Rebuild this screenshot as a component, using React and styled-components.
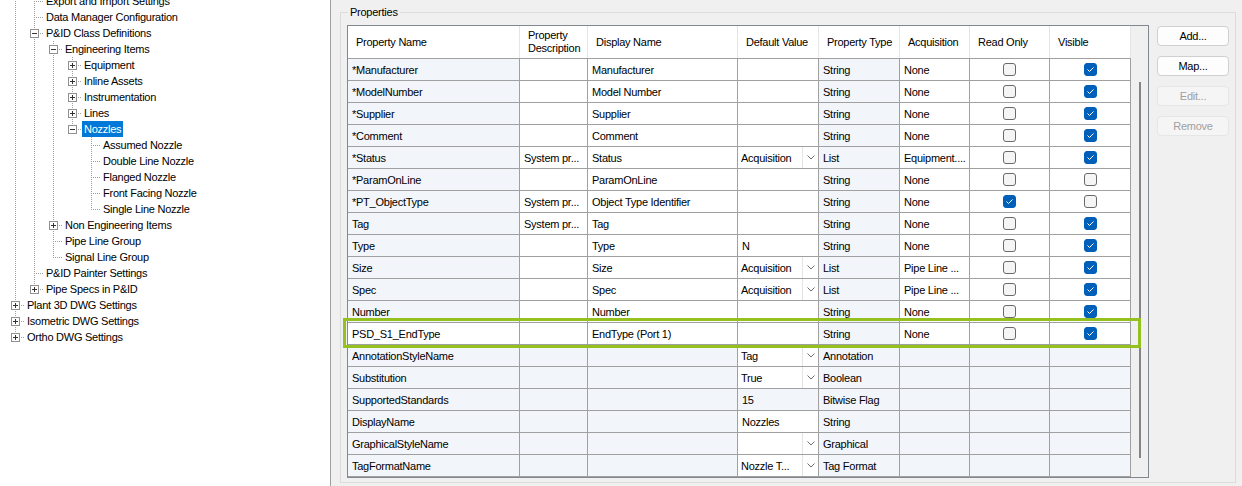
import React from 'react';
import styled, { createGlobalStyle, css } from 'styled-components';

const GlobalStyle = createGlobalStyle`
  html, body { margin:0; padding:0; }
  body {
    background:#f0f0f0;
    font-family:"Liberation Sans", Arial, sans-serif;
    font-size:11px;
    letter-spacing:-0.25px;
    color:#000;
  }
`;

const COLS = '172px 68px 150px 81px 81px 70px 80px 81px';
const SHADE = '#f2f5fa';

const TREE = [
  { label: 'P&ID DWG Settings', open: true, children: [
    { label: 'Export and Import Settings' },
    { label: 'Data Manager Configuration' },
    { label: 'P&ID Class Definitions', open: true, children: [
      { label: 'Engineering Items', open: true, children: [
        { label: 'Equipment', children: [] },
        { label: 'Inline Assets', children: [] },
        { label: 'Instrumentation', children: [] },
        { label: 'Lines', children: [] },
        { label: 'Nozzles', open: true, selected: true, children: [
          { label: 'Assumed Nozzle' },
          { label: 'Double Line Nozzle' },
          { label: 'Flanged Nozzle' },
          { label: 'Front Facing Nozzle' },
          { label: 'Single Line Nozzle' },
        ]},
      ]},
      { label: 'Non Engineering Items', children: [] },
      { label: 'Pipe Line Group' },
      { label: 'Signal Line Group' },
    ]},
    { label: 'P&ID Painter Settings' },
    { label: 'Pipe Specs in P&ID', children: [] },
  ]},
  { label: 'Plant 3D DWG Settings', children: [] },
  { label: 'Isometric DWG Settings', children: [] },
  { label: 'Ortho DWG Settings', children: [] },
];

const flatten = (nodes, guides = [], out = []) => {
  nodes.forEach((n, i) => {
    const last = i === nodes.length - 1;
    out.push({ ...n, guides, last });
    if (n.open && n.children) flatten(n.children, [...guides, !last], out);
  });
  return out;
};

const ROWS = [
  { name: '*Manufacturer', disp: 'Manufacturer', type: 'String', acq: 'None', vis: true },
  { name: '*ModelNumber', disp: 'Model Number', type: 'String', acq: 'None', vis: true },
  { name: '*Supplier', disp: 'Supplier', type: 'String', acq: 'None', vis: true },
  { name: '*Comment', disp: 'Comment', type: 'String', acq: 'None', vis: true },
  { name: '*Status', desc: 'System pr...', disp: 'Status', combo: 'Acquisition', type: 'List', acq: 'Equipment....', vis: true },
  { name: '*ParamOnLine', disp: 'ParamOnLine', type: 'String', acq: 'None' },
  { name: '*PT_ObjectType', desc: 'System pr...', disp: 'Object Type Identifier', type: 'String', acq: 'None', ro: true },
  { name: 'Tag', desc: 'System pr...', disp: 'Tag', type: 'String', acq: 'None', vis: true },
  { name: 'Type', disp: 'Type', def: 'N', type: 'String', acq: 'None', vis: true },
  { name: 'Size', disp: 'Size', combo: 'Acquisition', type: 'List', acq: 'Pipe Line ...', vis: true },
  { name: 'Spec', disp: 'Spec', combo: 'Acquisition', type: 'List', acq: 'Pipe Line ...', vis: true },
  { name: 'Number', disp: 'Number', type: 'String', acq: 'None', vis: true },
  { name: 'PSD_S1_EndType', disp: 'EndType (Port 1)', type: 'String', acq: 'None', vis: true, user: true, marked: true },
  { name: 'AnnotationStyleName', combo: 'Tag', type: 'Annotation', sys: true },
  { name: 'Substitution', combo: 'True', type: 'Boolean', sys: true },
  { name: 'SupportedStandards', def: '15', type: 'Bitwise Flag', sys: true, lockedDef: true },
  { name: 'DisplayName', def: 'Nozzles', type: 'String', sys: true },
  { name: 'GraphicalStyleName', combo: '', type: 'Graphical', sys: true },
  { name: 'TagFormatName', combo: 'Nozzle T...', type: 'Tag Format', sys: true },
];

const HEADERS = ['Property Name', 'Property\nDescription', 'Display Name', 'Default Value', 'Property Type', 'Acquisition', 'Read Only', 'Visible'];

const Window = styled.div`
  display:flex;
  width:1242px;
  height:486px;
  overflow:hidden;
  background:#f0f0f0;
`;

/* ---------- tree ---------- */

const TreePanel = styled.div`
  width:330px;
  flex:none;
  background:#fff;
  border-right:1px solid #a0a0a0;
  overflow:hidden;
`;

const TreeList = styled.ul`
  list-style:none;
  margin:-23px 0 0;
  padding:0 0 0 6px;
`;

const TreeRow = styled.li`
  display:flex;
  height:16px;
`;

const dotsV = 'repeating-linear-gradient(to bottom, #a0a0a0 0 1px, transparent 1px 2px)';
const dotsH = 'repeating-linear-gradient(to right, #a0a0a0 0 1px, transparent 1px 2px)';

const Guide = styled.span`
  position:relative;
  width:19px;
  flex:none;
  ${p => p.$line && css`
    &::before {
      content:'';
      position:absolute;
      left:9px; top:0; bottom:0; width:1px;
      background:${dotsV};
    }
  `}
`;

const Elbow = styled.span`
  position:relative;
  width:19px;
  flex:none;
  &::before {
    content:'';
    position:absolute;
    left:9px; top:0; width:1px;
    bottom:${p => (p.$last ? '8px' : '0')};
    background:${dotsV};
  }
  &::after {
    content:'';
    position:absolute;
    left:9px; right:0; top:8px; height:1px;
    background:${dotsH};
  }
`;

const Expander = styled.span`
  position:absolute;
  left:5px; top:4px;
  width:9px; height:9px;
  box-sizing:border-box;
  border:1px solid #919191;
  background:#fff;
  z-index:1;
  &::before {
    content:'';
    position:absolute;
    left:1px; top:3px; width:5px; height:1px;
    background:#333;
  }
  ${p => p.$collapsed && css`
    &::after {
      content:'';
      position:absolute;
      left:3px; top:1px; width:1px; height:5px;
      background:#333;
    }
  `}
`;

const NodeLabel = styled.span`
  padding:0 2px;
  line-height:16px;
  white-space:nowrap;
  ${p => p.$selected && css`
    background:#0078d7;
    color:#fff;
  `}
`;

/* ---------- properties ---------- */

const Content = styled.div`
  flex:1;
  min-width:0;
  display:flex;
  padding:5px 6px 3px 9px;
`;

const GroupBox = styled.fieldset`
  flex:1;
  min-width:0;
  margin:0;
  padding:6px 6px 3px;
  border:1px solid #dcdcdc;
  display:flex;
  align-items:flex-start;
  gap:8px;
`;

const Caption = styled.legend`
  margin-left:1px;
  padding:0 2px;
  line-height:14px;
`;

const GridFrame = styled.div`
  display:flex;
  border:1px solid #828790;
  background:#f0f0f0;
`;

const Table = styled.div`
  width:783px;
`;

const HeaderRow = styled.div`
  display:grid;
  grid-template-columns:${COLS};
  height:33px;
  box-sizing:border-box;
  background:#fff;
  border-bottom:1px solid #a0a0a0;
`;

const HeaderCell = styled.div`
  display:flex;
  align-items:center;
  padding-left:8px;
  line-height:13px;
  white-space:pre-line;
  border-right:1px solid #e5e5e5;
`;

const Row = styled.div`
  position:relative;
  display:grid;
  grid-template-columns:${COLS};
`;

const Cell = styled.div`
  box-sizing:border-box;
  height:22px;
  display:flex;
  align-items:center;
  justify-content:${p => (p.$center ? 'center' : 'flex-start')};
  padding:${p => (p.$flush ? '0' : '0 4px')};
  border-right:1px solid #a0a0a0;
  border-bottom:1px solid #a0a0a0;
  background:${p => (p.$shade ? SHADE : '#fff')};
  white-space:nowrap;
  overflow:hidden;
`;

const Combo = styled.div`
  display:flex;
  width:100%;
  height:100%;
  background:#fff;
`;

const ComboText = styled.span`
  flex:1;
  display:flex;
  align-items:center;
  padding-left:3px;
  overflow:hidden;
`;

const ComboArrow = styled.span`
  width:15px;
  flex:none;
  display:flex;
  align-items:center;
  justify-content:center;
  border-left:1px solid #e3e3e3;
`;

const Check = styled.span`
  width:13px;
  height:13px;
  box-sizing:border-box;
  border-radius:3px;
  display:flex;
  align-items:center;
  justify-content:center;
  border:1px solid ${p => (p.$on ? '#005fb8' : '#6a6a6a')};
  background:${p => (p.$on ? '#005fb8' : '#f5f5f5')};
`;

const Marker = styled.div`
  position:absolute;
  left:-5px;
  right:-10px;
  top:-5px;
  bottom:-3px;
  border:3px solid #95c11f;
  pointer-events:none;
  z-index:2;
`;

const ScrollTrack = styled.div`
  width:17px;
  flex:none;
  padding-top:56px;
  background:#f0f0f0;
`;

const ScrollThumb = styled.div`
  width:2px;
  height:376px;
  margin-left:8px;
  background:#858585;
`;

const ButtonColumn = styled.div`
  display:flex;
  flex-direction:column;
  gap:10px;
  padding-top:1px;
`;

const Button = styled.button`
  width:72px;
  height:20px;
  box-sizing:border-box;
  padding:0;
  border-radius:4px;
  border:1px solid #d0d0d0;
  background:#fdfdfd;
  color:#000;
  font:inherit;
  letter-spacing:inherit;
  ${p => p.disabled && css`
    background:#f5f5f5;
    border-color:#e6e6e6;
    color:#a0a0a0;
  `}
`;

const ChevronIcon = () => (
  <svg width="8" height="5" viewBox="0 0 8 5">
    <polyline points="0.5,0.5 4,4 7.5,0.5" fill="none" stroke="#6d6d6d" strokeWidth="1" />
  </svg>
);

const CheckBox = ({ on }) => (
  <Check $on={on}>
    {on && (
      <svg width="9" height="9" viewBox="0 0 9 9">
        <polyline points="1.5,4.5 3.5,6.5 7.5,2.5" fill="none" stroke="#fff" strokeWidth="1" />
      </svg>
    )}
  </Check>
);

function TreeView() {
  const items = flatten(TREE);
  return (
    <TreePanel>
      <TreeList>
        {items.map((n, i) => (
          <TreeRow key={i}>
            {n.guides.map((g, j) => <Guide key={j} $line={g} />)}
            <Elbow $last={n.last}>
              {n.children && <Expander $collapsed={!n.open} />}
            </Elbow>
            <NodeLabel $selected={n.selected}>{n.label}</NodeLabel>
          </TreeRow>
        ))}
      </TreeList>
    </TreePanel>
  );
}

function PropertyRow({ r }) {
  const sys = !!r.sys;
  let def;
  if (r.combo !== undefined) {
    def = (
      <Cell $flush>
        <Combo>
          <ComboText>{r.combo}</ComboText>
          <ComboArrow><ChevronIcon /></ComboArrow>
        </Combo>
      </Cell>
    );
  } else {
    def = <Cell $shade={r.lockedDef}>{r.def}</Cell>;
  }
  return (
    <Row>
      <Cell $shade={!r.user}>{r.name}</Cell>
      <Cell $shade={sys}>{r.desc}</Cell>
      <Cell $shade={sys}>{r.disp}</Cell>
      {def}
      <Cell $shade>{r.type}</Cell>
      <Cell $shade={sys}>{r.acq}</Cell>
      <Cell $shade={sys} $center>{!sys && <CheckBox on={!!r.ro} />}</Cell>
      <Cell $shade={sys} $center>{!sys && <CheckBox on={!!r.vis} />}</Cell>
      {r.marked && <Marker />}
    </Row>
  );
}

export default function App() {
  return (
    <>
      <GlobalStyle />
      <Window>
        <TreeView />
        <Content>
          <GroupBox>
            <Caption>Properties</Caption>
            <GridFrame>
              <Table>
                <HeaderRow>
                  {HEADERS.map(h => <HeaderCell key={h}>{h}</HeaderCell>)}
                </HeaderRow>
                {ROWS.map(r => <PropertyRow key={r.name} r={r} />)}
              </Table>
              <ScrollTrack>
                <ScrollThumb />
              </ScrollTrack>
            </GridFrame>
            <ButtonColumn>
              <Button>Add...</Button>
              <Button>Map...</Button>
              <Button disabled>Edit...</Button>
              <Button disabled>Remove</Button>
            </ButtonColumn>
          </GroupBox>
        </Content>
      </Window>
    </>
  );
}
